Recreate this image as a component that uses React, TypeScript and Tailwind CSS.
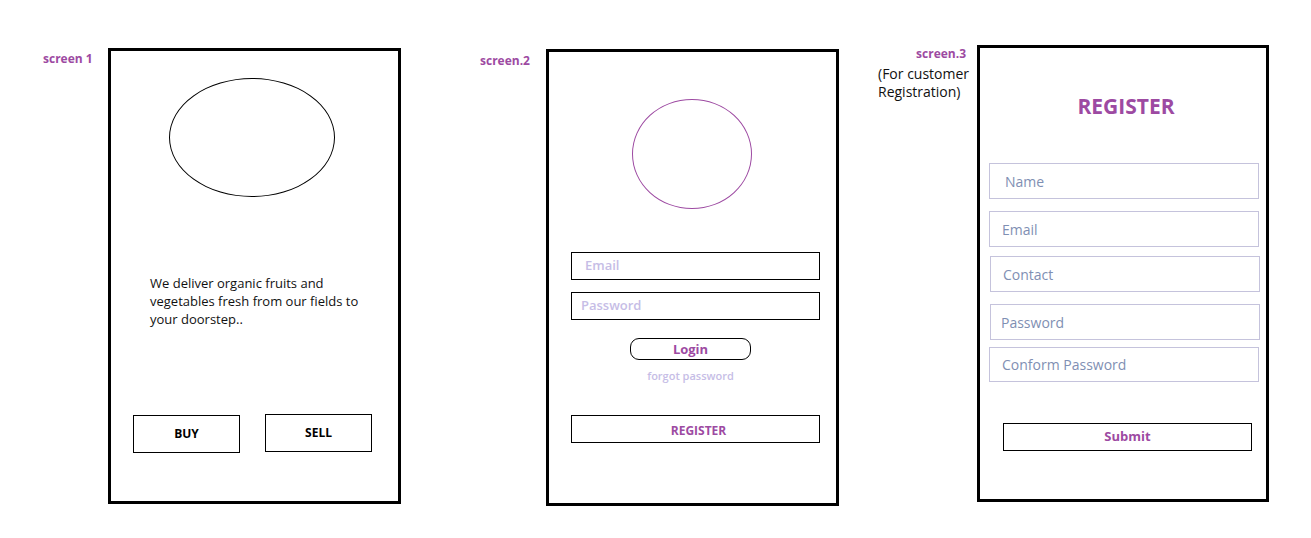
import React from "react";

const purple = "text-[#9d4aa2]";

const Screen1 = () => (
  <div className="flex flex-col w-[293px] h-[456px] mt-[48px] border-[3px] border-black">
    <div className="ml-[58px] mt-[27px] w-[166px] h-[119px] rounded-[50%] border border-black" />
    <p className="mt-[77px] pl-[39px] pr-[20px] text-[13px] leading-[18px] text-[#111]">
      We deliver organic fruits and
      <br />
      vegetables fresh from our fields to
      <br />
      your doorstep..
    </p>
    <div className="flex mt-[87px] pl-[22px] gap-[25px]">
      <button className="w-[107px] h-[38px] border-[1.5px] border-black text-[12px] font-bold text-black">
        BUY
      </button>
      <button className="w-[107px] h-[38px] -mt-px border-[1.5px] border-black text-[12px] font-bold text-black">
        SELL
      </button>
    </div>
  </div>
);

const Screen2 = () => (
  <div className="flex flex-col w-[293px] h-[457px] mt-[49px] border-[3px] border-black">
    <div className="ml-[83px] mt-[47px] w-[120px] h-[110px] rounded-[50%] border border-[#9d4aa2]" />
    <div className="ml-[22px] mt-[43px] w-[249px] h-[28px] border-[1.5px] border-black flex items-center pl-[13px] text-[13px] font-semibold text-[#c6bde6]">
      Email
    </div>
    <div className="ml-[22px] mt-[12px] w-[249px] h-[28px] border-[1.5px] border-black flex items-center pl-[9px] text-[13px] font-semibold text-[#c6bde6]">
      Password
    </div>
    <button
      className={`ml-[81px] mt-[18px] w-[121px] h-[22px] pt-px rounded-[9px] border-[1.5px] border-black text-[13px] font-bold ${purple}`}
    >
      Login
    </button>
    <div className="ml-[81px] mt-[9px] w-[121px] text-center text-[11px] leading-[14px] font-semibold text-[#c6bde6]">
      forgot password
    </div>
    <button
      className={`ml-[22px] mt-[32px] w-[249px] h-[28px] pt-[3px] border-[1.5px] border-black pl-[6px] text-[12px] font-bold ${purple}`}
    >
      REGISTER
    </button>
  </div>
);

const fields = [
  { label: "Name", ml: "ml-[9px]", mt: "mt-[44px]", pl: "pl-[15px]", h: "h-[36px]" },
  { label: "Email", ml: "ml-[9px]", mt: "mt-[12px]", pl: "pl-[12px]", h: "h-[36px]" },
  { label: "Contact", ml: "ml-[10px]", mt: "mt-[9px]", pl: "pl-[12px]", h: "h-[36px]" },
  { label: "Password", ml: "ml-[10px]", mt: "mt-[12px]", pl: "pl-[10px]", h: "h-[36px]" },
  { label: "Conform Password", ml: "ml-[9px]", mt: "mt-[7px]", pl: "pl-[12px]", h: "h-[35px]" },
];

const Screen3 = () => (
  <div className="flex flex-col w-[292px] h-[457px] mt-[45px] border-[3px] border-black">
    <h1 className={`mt-[45px] pl-[6px] text-center text-[21px] leading-[26px] font-bold ${purple}`}>
      REGISTER
    </h1>
    {fields.map((f) => (
      <div
        key={f.label}
        className={`${f.ml} ${f.mt} ${f.pl} ${f.h} w-[270px] border border-[#c5c3dc] flex items-center text-[14px] text-[#7f8fb3]`}
      >
        {f.label}
      </div>
    ))}
    <button
      className={`ml-[23px] mt-[41px] w-[249px] h-[28px] border-[1.5px] border-black text-[13px] font-bold ${purple}`}
    >
      Submit
    </button>
  </div>
);

export default function App() {
  return (
    <div
      className="w-[1311px] h-[538px] bg-white flex items-start pl-[43px]"
      style={{ fontFamily: '"Open Sans", "Noto Sans", sans-serif' }}
    >
      <div className={`w-[65px] mt-[50px] text-[12px] font-bold ${purple}`}>screen 1</div>
      <Screen1 />
      <div className={`ml-[79px] w-[66px] mt-[52px] text-[12px] font-bold ${purple}`}>screen.2</div>
      <Screen2 />
      <div className="ml-[39px] w-[99px] mt-[46px] flex flex-col">
        <div className={`pr-[11px] text-right text-[12px] leading-[16px] font-bold ${purple}`}>screen.3</div>
        <div className="mt-[3px] text-[14px] leading-[18px] text-[#111]">
          (For customer
          <br />
          Registration)
        </div>
      </div>
      <Screen3 />
    </div>
  );
}
